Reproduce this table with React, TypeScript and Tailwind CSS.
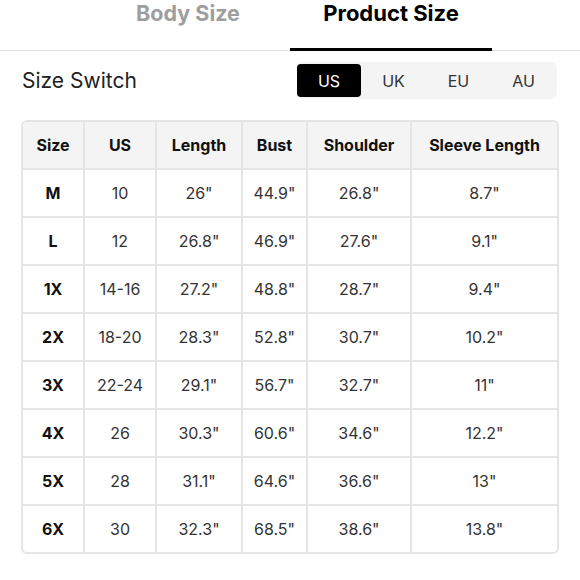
import React from "react";

const headers = ["Size", "US", "Length", "Bust", "Shoulder", "Sleeve Length"];
const widths = ["w-[60px]", "w-[72px]", "w-[86px]", "w-[65px]", "w-[104px]", "w-[147px]"];

const rows: string[][] = [
  ["M", "10", '26"', '44.9"', '26.8"', '8.7"'],
  ["L", "12", '26.8"', '46.9"', '27.6"', '9.1"'],
  ["1X", "14-16", '27.2"', '48.8"', '28.7"', '9.4"'],
  ["2X", "18-20", '28.3"', '52.8"', '30.7"', '10.2"'],
  ["3X", "22-24", '29.1"', '56.7"', '32.7"', '11"'],
  ["4X", "26", '30.3"', '60.6"', '34.6"', '12.2"'],
  ["5X", "28", '31.1"', '64.6"', '36.6"', '13"'],
  ["6X", "30", '32.3"', '68.5"', '38.6"', '13.8"'],
];

const units = ["US", "UK", "EU", "AU"];

export default function App() {
  return (
    <div className="w-[580px] h-[580px] bg-white text-[#222] font-['Inter','Noto_Sans',sans-serif] overflow-hidden">
      {/* Tabs */}
      <div className="flex h-[51px] border-b border-[#e2e2e2]">
        <div className="w-[86px]" />
        <div className="w-[204px] flex justify-center -mt-[3px] text-[21.5px] font-bold text-[#9e9e9e]">
          Body Size
        </div>
        <div className="w-[202px] flex justify-center -mt-[3px] text-[22px] font-bold text-black border-b-[3px] border-black -mb-[1px]">
          Product Size
        </div>
      </div>

      {/* Size switch */}
      <div className="flex items-center justify-between pl-[22px] pr-[23px] pt-[11px]">
        <span className="text-[21px] text-[#222]">Size Switch</span>
        <div className="flex w-[260px] h-[37px] rounded-[6px] bg-[#f4f4f4] py-[2px]">
          {units.map((u, i) => (
            <div
              key={u}
              className={
                i === 0
                  ? "w-[64px] flex items-center justify-center rounded-[4px] bg-black text-white text-[16px]"
                  : "w-[65px] flex items-center justify-center text-[16px] text-[#333]"
              }
            >
              {u}
            </div>
          ))}
        </div>
      </div>

      {/* Table */}
      <div className="ml-[21px] mt-[21px] w-[538px] rounded-[6px] border-2 border-[#e5e5e5] overflow-hidden">
        <div className="flex h-[46px] bg-[#f4f4f4]">
          {headers.map((h, i) => (
            <div
              key={h}
              className={`${widths[i]} flex items-center justify-center text-[16px] font-bold text-[#111] ${i > 0 ? "border-l-2 border-[#e5e5e5]" : ""}`}
            >
              {h}
            </div>
          ))}
        </div>
        {rows.map((r) => (
          <div key={r[0]} className="flex h-[48px] border-t-2 border-[#e5e5e5]">
            {r.map((c, i) => (
              <div
                key={i}
                className={`${widths[i]} flex items-center justify-center text-[16px] ${i === 0 ? "font-bold text-[#111]" : "text-[#333]"} ${i > 0 ? "border-l-2 border-[#e5e5e5]" : ""}`}
              >
                {c}
              </div>
            ))}
          </div>
        ))}
      </div>
    </div>
  );
}
